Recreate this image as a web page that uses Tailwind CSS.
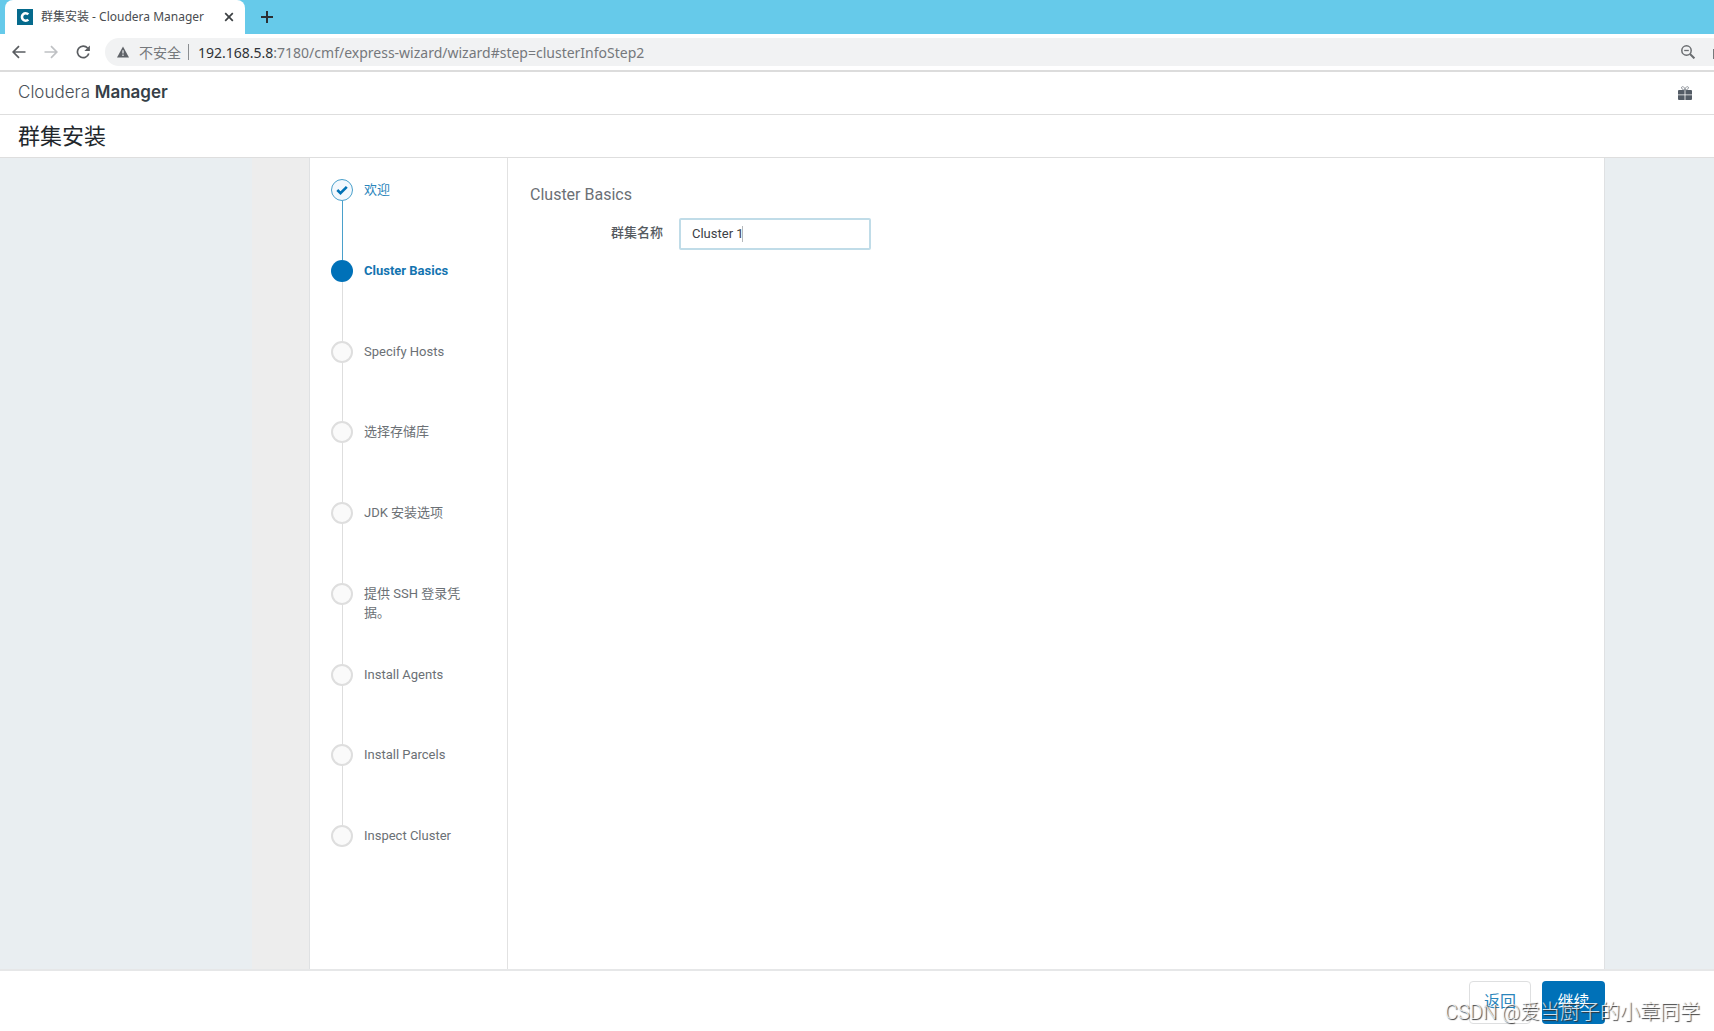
<!DOCTYPE html>
<html lang="zh-CN">
<head>
<meta charset="utf-8">
<title>群集安装 - Cloudera Manager</title>
<script src="https://cdn.jsdelivr.net/npm/@tailwindcss/browser@4"></script>
</head>
<body class="flex min-h-screen flex-col overflow-x-hidden bg-white font-['Roboto','Noto_Sans_CJK_SC',sans-serif] text-[13px] text-[#6b7075]">

<!-- Browser tabs -->
<div class="flex h-[34px] items-end bg-[#66caea] font-['Noto_Sans','Noto_Sans_CJK_SC',sans-serif]">
  <div class="ml-[5px] flex h-[34px] w-60 items-center rounded-t-lg bg-white pl-3 pr-2">
    <svg class="size-4 shrink-0" viewBox="0 0 16 16"><rect width="16" height="16" fill="#056a8c"/><path d="M11.3 5.4A3.7 3.7 0 1 0 11.3 10.6" fill="none" stroke="#fff" stroke-width="2.6"/></svg>
    <span class="ml-2 grow whitespace-nowrap text-[12px] text-[#4a4d51]">群集安装 - Cloudera Manager</span>
    <button class="p-0.5" aria-label="关闭标签页"><svg class="size-3" viewBox="0 0 12 12" stroke="#3c4043" stroke-width="1.7"><path d="M2.2 2.2l7.6 7.6M9.8 2.2l-7.6 7.6"/></svg></button>
  </div>
  <button class="mb-2 ml-[13px] p-0.5" aria-label="新标签页"><svg class="size-3.5" viewBox="0 0 14 14" stroke="#2b2f33" stroke-width="2"><path d="M7 1v12M1 7h12"/></svg></button>
</div>

<!-- Address bar -->
<div class="flex h-[38px] items-center border-b-2 border-[#dcdcdc] pl-3">
  <button aria-label="后退"><svg class="size-3.5" viewBox="0 0 14 14" fill="none" stroke="#5a5d61" stroke-width="1.7"><path d="M13.5 7H1.5M7 1.2L1.2 7L7 12.8"/></svg></button>
  <button class="ml-[18px]" aria-label="前进"><svg class="size-3.5" viewBox="0 0 14 14" fill="none" stroke="#bfc1c4" stroke-width="1.7"><path d="M.5 7h12M7 1.2L12.8 7L7 12.8"/></svg></button>
  <button class="ml-[18px]" aria-label="刷新"><svg class="size-3.5" viewBox="0 0 14 14" fill="none" stroke="#5a5d61" stroke-width="1.7"><path d="M11.6 3A5.8 5.8 0 1 0 12.8 8.6"/><path d="M13.9.4v5.5H8.4z" fill="#5a5d61" stroke="none"/></svg></button>
  <div class="ml-[15px] flex h-7 grow items-center rounded-l-full bg-[#f1f2f3] pl-3 font-['Noto_Sans','Noto_Sans_CJK_SC',sans-serif] text-[14px] text-[#75787c]">
    <svg class="size-3" viewBox="0 0 12 12"><path d="M6 .5L12 11.5H0z" fill="#5f6368"/><path d="M6 4.2v3.4M6 8.6V10" stroke="#f1f2f3" stroke-width="1.2"/></svg>
    <span class="ml-2.5">不安全</span>
    <span class="ml-[7px] mr-[9px] h-4 w-px bg-[#8a8d90]"></span>
    <span class="whitespace-nowrap"><span class="text-[#2f3236]">192.168.5.8</span>:7180/cmf/express-wizard/wizard#step=clusterInfoStep2</span>
    <button class="ml-auto" aria-label="缩小"><svg class="size-3.5" viewBox="0 0 14 14" fill="none" stroke="#6a6d70"><circle cx="5.5" cy="5.5" r="4.7" stroke-width="1.5"/><path d="M9 9l4.4 4.4" stroke-width="2"/><path d="M3.2 5.5h4.6" stroke-width="1.3"/></svg></button>
    <span class="ml-[18px] mt-1 h-2.5 w-px bg-[#77797c]"></span>
  </div>
</div>

<header class="flex h-[43px] items-center border-b border-[#dedede] px-[18px]">
  <a href="#" class="font-['Inter',sans-serif] text-[17px] font-light text-[#4a5157]">Cloudera <span class="font-semibold text-[#363f47]">Manager</span></a>
  <button class="ml-auto mr-1" aria-label="新功能"><svg class="size-3.5" viewBox="0 0 14 14" fill="#545c66"><path d="M0 5q0-1 1-1h5.6v4.400H0zM7.4 4H13q1 0 1 1v3.400H7.400zM0 9.200h6.600V14H1q-1 0-1-1zM7.400 9.200H14V13q0 1-1 1H7.400z"/><path d="M7 4C3.500 4.200 2.500.6 4.600.600 6 .600 7 2.500 7 4C7 2.500 8 .600 9.400.600 11.500.600 10.500 4.200 7 4" fill="none" stroke="#7d848c" stroke-width=".8"/></svg></button>
</header>

<div class="flex h-[43px] items-center border-b border-[#dedede] px-[18px]">
  <h1 class="text-[22px] text-[#22272c]">群集安装</h1>
</div>

<main class="flex grow bg-[#e9eef1]">
  <div class="ml-[252px] w-[57px] shrink-0 bg-[#ededed]"></div>
  <div class="mr-[109px] flex grow border-x border-[#dfe1e3] bg-white">
    <nav class="w-[198px] shrink-0 border-r border-[#e2e2e2] pl-[21px] pt-[21px]" aria-label="安装步骤">
      <ol class="flex h-[668px] flex-col">
        <li class="flex flex-1 gap-[11px]">
          <div class="flex w-[22px] flex-col items-center">
            <span class="flex size-[22px] shrink-0 items-center justify-center rounded-full border border-[#4aa0cb] bg-[#f3f8fd]"><svg class="size-3" viewBox="0 0 12 12" fill="none" stroke="#0071b5" stroke-width="2.600"><path d="M1.300 6l3.200 3.200L10.800 2.800"/></svg></span>
            <span class="w-px grow bg-[#4aa0cb]"></span>
          </div>
          <a href="#" class="w-[100px] pt-px leading-[19px] text-[#2a85bb]">欢迎</a>
        </li>
        <li class="flex flex-1 gap-[11px]">
          <div class="flex w-[22px] flex-col items-center">
            <span class="size-[22px] shrink-0 rounded-full bg-[#0071b8]"></span>
            <span class="w-px grow bg-[#dedede]"></span>
          </div>
          <span class="w-[100px] pt-px font-bold leading-[19px] text-[#1374b0]" aria-current="step">Cluster Basics</span>
        </li>
        <li class="flex flex-1 gap-[11px]">
          <div class="flex w-[22px] flex-col items-center"><span class="size-[22px] shrink-0 rounded-full border-2 border-[#dedede] bg-[#fafafa]"></span><span class="w-px grow bg-[#dedede]"></span></div>
          <span class="w-[100px] pt-px leading-[19px]">Specify Hosts</span>
        </li>
        <li class="flex flex-1 gap-[11px]">
          <div class="flex w-[22px] flex-col items-center"><span class="size-[22px] shrink-0 rounded-full border-2 border-[#dedede] bg-[#fafafa]"></span><span class="w-px grow bg-[#dedede]"></span></div>
          <span class="w-[100px] pt-px leading-[19px]">选择存储库</span>
        </li>
        <li class="flex flex-1 gap-[11px]">
          <div class="flex w-[22px] flex-col items-center"><span class="size-[22px] shrink-0 rounded-full border-2 border-[#dedede] bg-[#fafafa]"></span><span class="w-px grow bg-[#dedede]"></span></div>
          <span class="w-[100px] pt-px leading-[19px]">JDK 安装选项</span>
        </li>
        <li class="flex flex-1 gap-[11px]">
          <div class="flex w-[22px] flex-col items-center"><span class="size-[22px] shrink-0 rounded-full border-2 border-[#dedede] bg-[#fafafa]"></span><span class="w-px grow bg-[#dedede]"></span></div>
          <span class="w-[100px] pt-px leading-[19px]">提供 SSH 登录凭据。</span>
        </li>
        <li class="flex flex-1 gap-[11px]">
          <div class="flex w-[22px] flex-col items-center"><span class="size-[22px] shrink-0 rounded-full border-2 border-[#dedede] bg-[#fafafa]"></span><span class="w-px grow bg-[#dedede]"></span></div>
          <span class="w-[100px] pt-px leading-[19px]">Install Agents</span>
        </li>
        <li class="flex flex-1 gap-[11px]">
          <div class="flex w-[22px] flex-col items-center"><span class="size-[22px] shrink-0 rounded-full border-2 border-[#dedede] bg-[#fafafa]"></span><span class="w-px grow bg-[#dedede]"></span></div>
          <span class="w-[100px] pt-px leading-[19px]">Install Parcels</span>
        </li>
        <li class="flex gap-[11px]">
          <span class="size-[22px] shrink-0 rounded-full border-2 border-[#dedede] bg-[#fafafa]"></span>
          <span class="w-[100px] pt-px leading-[19px]">Inspect Cluster</span>
        </li>
      </ol>
    </nav>

    <section class="grow pl-[22px] pt-[25px]">
      <h2 class="text-[16px] leading-6 text-[#6b7075]">Cluster Basics</h2>
      <form class="mt-[11px] flex items-center">
        <label for="cluster-name" class="w-[133px] pb-0.5 text-right font-medium text-[#555a60]">群集名称</label>
        <div class="relative ml-4">
          <input id="cluster-name" type="text" value="Cluster 1" class="block h-8 w-48 rounded-xs border-2 border-[#c0dce8] bg-white px-[11px] pb-0.5 text-[13px] text-[#3c4146] outline-none">
          <span class="absolute left-[63px] top-2 h-4 w-px bg-[#b5b8bb]"></span>
        </div>
      </form>
    </section>
  </div>
</main>

<footer class="relative flex h-[62px] items-start justify-end gap-[11px] border-t-2 border-[#e6e7e8] pr-[109px] pt-[10px] text-[16px]">
  <button class="h-[43px] w-[62px] rounded-sm border border-[#dedfe0] bg-white pb-0.5 text-[#2a85bb]">返回</button>
  <button class="h-[43px] w-[63px] rounded-sm bg-[#0071b8] pb-0.5 text-white">继续</button>
  <span class="absolute bottom-1 right-[14px] whitespace-nowrap text-[20px] font-light text-white/80 text-shadow-[1px_1px_1px_#333]">CSDN @爱当厨子的小章同学</span>
</footer>
</body>
</html>
